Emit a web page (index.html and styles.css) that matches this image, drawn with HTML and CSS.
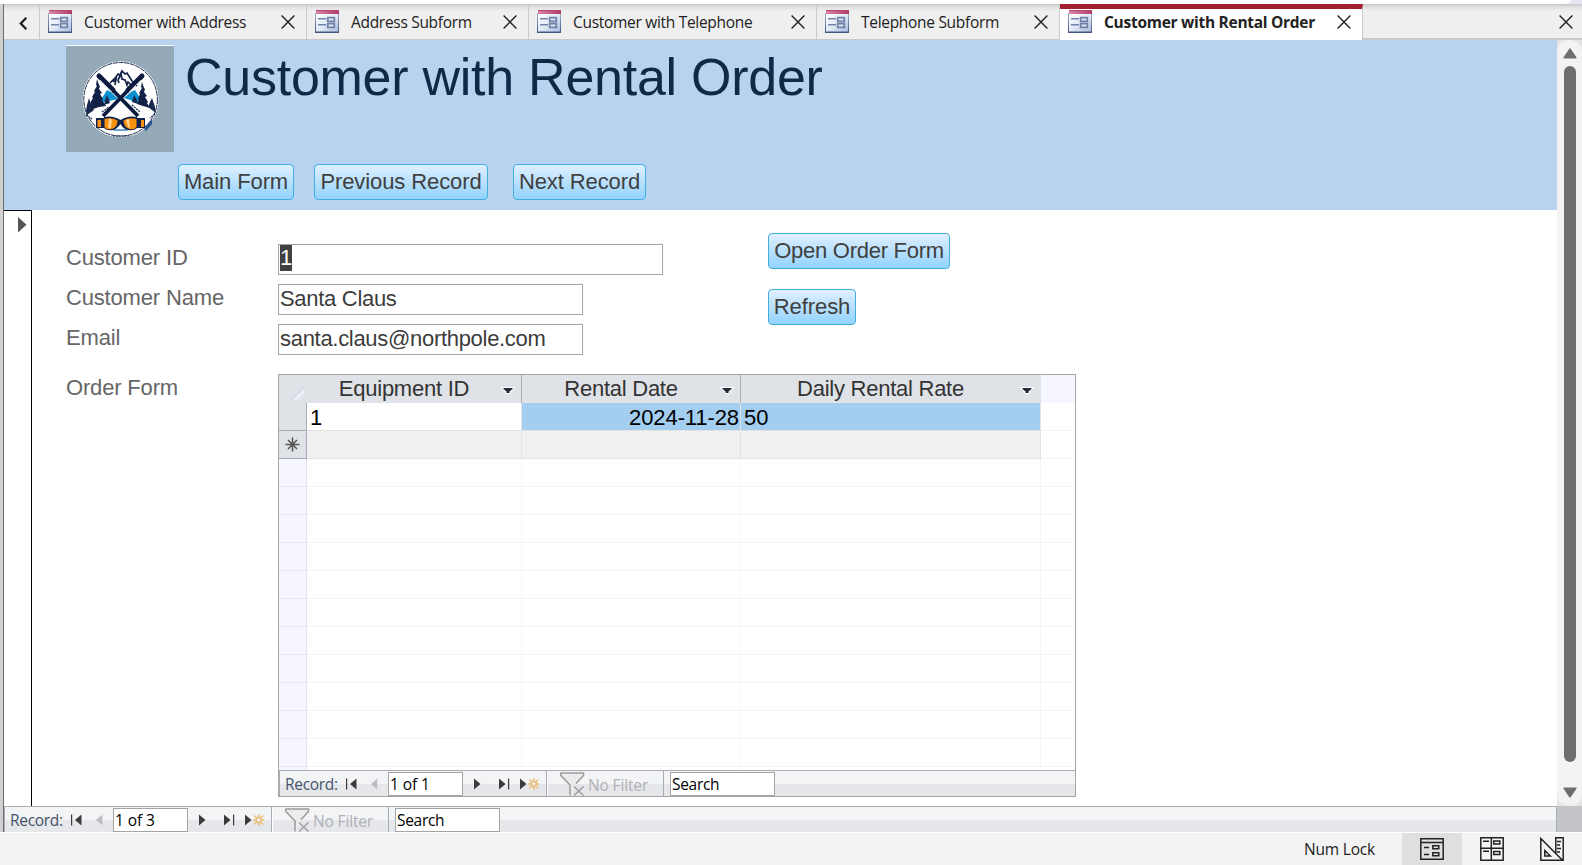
FILE: index.html
```html
<!DOCTYPE html>
<html lang="en">
<head>
<meta charset="utf-8">
<title>Customer with Rental Order</title>
<link rel="stylesheet" href="styles.css">
</head>
<body>
<svg class="defs" width="0" height="0" aria-hidden="true">
  <defs>
    <linearGradient id="g-body" x1="0" y1="0" x2="1" y2="1"><stop offset="0" stop-color="#fff"/><stop offset=".5" stop-color="#e3eaf6"/><stop offset="1" stop-color="#a9bde0"/></linearGradient>
    <linearGradient id="g-top" x1="0" y1="0" x2="1" y2="0"><stop offset="0" stop-color="#d88aa6"/><stop offset="1" stop-color="#b13a66"/></linearGradient>
    <linearGradient id="g-side" x1="0" y1="0" x2="0" y2="1"><stop offset="0" stop-color="#9db0d2"/><stop offset="1" stop-color="#44557c"/></linearGradient>
    <linearGradient id="g-corner" x1="0" y1="0" x2="1" y2="1"><stop offset=".4" stop-color="#f8f9fb"/><stop offset="1" stop-color="#d6dbe4"/></linearGradient>
    <symbol id="i-form" viewBox="0 0 24 23">
      <rect x="0" y="3" width="24" height="20" fill="url(#g-side)"/>
      <rect x="1" y="4" width="22" height="17.5" fill="url(#g-body)"/>
      <rect x="1" y="0" width="23" height="4" fill="url(#g-top)"/>
      <rect x="1" y="0" width="23" height="1" fill="#b9446f"/>
      <path d="M3 8.8h8M3 14.8h8" stroke="#6f83ad" stroke-width="1.6"/>
      <path d="M12.7 7.7h6.6v3.6h-6.6zM12.7 13.7h6.6v3.6h-6.6z" fill="#dfe6f3" stroke="#7082a6" stroke-width="1.8"/>
    </symbol>
    <symbol id="i-close" viewBox="0 0 14 14"><path d="M.6.6l12.8 12.8M13.4.6L.6 13.4" stroke="#222" stroke-width="1.4" fill="none"/></symbol>
    <symbol id="i-first" viewBox="0 0 11 12"><path d="M0 .5h1.2v11H0zM10.5.5v11L4 6z" fill="#3b3b3b"/></symbol>
    <symbol id="i-prev" viewBox="0 0 7 12"><path d="M6.3.8v10.4L0 6z" fill="#bdbdc1"/></symbol>
    <symbol id="i-next" viewBox="0 0 7 12"><path d="M0 .6v10.8L6.5 6z" fill="#3b3b3b"/></symbol>
    <symbol id="i-last" viewBox="0 0 11 12"><path d="M9 .5h1.2v11H9zM0 .5v11L6.5 6z" fill="#3b3b3b"/></symbol>
    <symbol id="i-new" viewBox="0 0 20 12"><path d="M0 .5v11L6.5 6z" fill="#3b3b3b"/><circle cx="13.7" cy="6" r="2.6" fill="none" stroke="#e9be7a" stroke-width="1.6"/><path d="M13.7 0v3.6M13.7 8.4V12M8 6h3M16.4 6h3M9.2 1.4l2.8 2.8M15.4 7.8l2.8 2.8M18.2 1.4l-2.8 2.8M12 7.8l-2.8 2.8" stroke="#e9be7a" stroke-width="1.4"/></symbol>
    <symbol id="i-funnel" viewBox="0 0 25 24"><path d="M10 23.5V13L.8 3.5V1h22.7v2.5L16 11.5" fill="#ececee" stroke="#9b9b9b" stroke-width="1.5"/><path d="M14 14.5l9.5 9M23.5 14.5l-9.5 9" stroke="#9f9f9f" stroke-width="1.5"/></symbol>
    <symbol id="i-drop" viewBox="0 0 14 7"><path d="M0 0h14v1.2h-1.500L8.800 7H5.200L1.500 1.200H0z" fill="#fff"/><path d="M2.500 1h9v1L8.500 4.500V6h-3V4.500L2.500 2z" fill="#222c38"/></symbol>
  </defs>
</svg>

<div class="window">
  <div class="edge"></div>
  <div class="top-strip"><div class="top-card"></div></div>

  <nav class="tabs">
    <div class="tab-scroll"><svg width="9" height="13" viewBox="0 0 9 13"><path d="M7.300.8L1.800 6.500l5.500 5.700" fill="none" stroke="#222" stroke-width="2.300"/></svg></div>
    <div class="tab t1"><svg class="tab-icon"><use href="#i-form"/></svg><span class="tab-text">Customer with Address</span><svg class="tab-close"><use href="#i-close"/></svg></div>
    <div class="tab t2"><svg class="tab-icon"><use href="#i-form"/></svg><span class="tab-text">Address Subform</span><svg class="tab-close"><use href="#i-close"/></svg></div>
    <div class="tab t3"><svg class="tab-icon"><use href="#i-form"/></svg><span class="tab-text">Customer with Telephone</span><svg class="tab-close"><use href="#i-close"/></svg></div>
    <div class="tab t4"><svg class="tab-icon"><use href="#i-form"/></svg><span class="tab-text">Telephone Subform</span><svg class="tab-close"><use href="#i-close"/></svg></div>
    <div class="tab t5 active"><svg class="tab-icon"><use href="#i-form"/></svg><span class="tab-text">Customer with Rental Order</span><svg class="tab-close"><use href="#i-close"/></svg></div>
    <div class="tab-rest"><svg class="tab-close"><use href="#i-close"/></svg></div>
  </nav>

  <div class="work">
    <div class="form">
      <header class="form-head">
        <svg class="logo" width="108" height="107" viewBox="0 0 108 107">
          <rect width="108" height="107" fill="#94aab8"/><rect width="108" height="1" fill="#fff"/>
          <circle cx="54.600" cy="54.300" r="38" fill="#fff"/>
          <circle cx="54.600" cy="54.300" r="36.800" fill="none" stroke="#17264d" stroke-width="1" stroke-dasharray="5 .7"/>
          <path d="M33 58l8-13 4 2 7 7-9 2zM58 53l7-6 4-2 7 11-4 2-8-3z" fill="#0b92cf"/>
          <path d="M44 38l6-6 2-3 2 1 2-4 3 3 2-1 5 8 5 5M47 37l3-3-1 6M55 29l1 5 3 1 2 5 1-3 4 4M54 31l-2 4 1 3" stroke="#14234a" stroke-width="1.700" fill="none"/>
          <path d="M31 34l2 6 1 1-1 3 3 4-2 1 3 5-1 1 4 6-7 1-9 3-2-3 3-3-1-1 3-5-1-1 3-5-1-1 3-5-1-1zM76 37l2 6 1 1-1 3 3 4-2 1 3 5-1 1 3 5-7-2-6-2 2-4-1-1 2-5-1-1 3-5-1-1z" fill="#122047"/>
          <path d="M23 53l2 7 3 5-7 5-1-4 1-6zM86 53l3 9 1 6-8-6 2-5zM41 50l2 5 1 3-6 2 1-5zM68 50l3 5 1 4-6-2z" fill="#17264d"/>
          <path d="M21 73c10-9 20-13 28-14l-12 11-2 3zM60 58c9 1 20 7 28 14l-6 2-11-2z" fill="#fff"/>
          <path d="M20 70l6 4M89 69l-5 4M36 67l7-5M66 60l8 7M47 91h16" stroke="#17264d" stroke-width="1.200" stroke-dasharray="2 .8"/>
          <path d="M34 32L72 71M75 32L37 71" stroke="#0d1a3f" stroke-width="3.800"/>
          <path d="M33 31l14 14M76 31L62 45" stroke="#0d1a3f" stroke-width="5" stroke-linecap="round"/>
          <path d="M34 35l12 12M75 35L63 47" stroke="#dfe4ec" stroke-width=".8"/>
          <path d="M78 84l8-10v5l-6 7z" fill="#27548e"/>
          <path d="M46 84h17l-2 2H48z" fill="#6fa5d2"/>
          <path d="M30 73h8v-1q9-2 16.500 3 7.500-5 16.500-3v1h8v10h-8q-3 3-9 2-5-1-7.500-6-3.500 5-7.500 6-6 1-9-2h-8z" fill="#14234a"/>
          <path d="M31.500 75h3.500v7h-3.500zM75 75h3v7h-3zM38.500 74q7-2 13 1.500 0 7-6 8.500-5 1-7-2zM57.500 75.500q6-3.500 13-1.500v8q-2 3-7 2-6-2-6-8.500z" fill="#f8920f"/>
          <path d="M43 73.500l-1 9 3 1 1-9zM60 75l2 7 2 1-1-9z" fill="#ffd28e"/>
        </svg>
        <div class="head-main">
          <h1>Customer with Rental Order</h1>
          <div class="head-buttons">
            <button class="btn b-main">Main Form</button>
            <button class="btn b-prev">Previous Record</button>
            <button class="btn b-next">Next Record</button>
          </div>
        </div>
      </header>

      <div class="detail">
        <div class="selector"><svg width="9" height="16" viewBox="0 0 9 16"><path d="M0 0v15.500L8.500 7.700z" fill="#555"/></svg></div>
        <main class="fields">
          <label class="f-label">Customer ID</label><div class="box wide"><span class="sel">1</span></div>
          <label class="f-label">Customer Name</label><div class="box">Santa Claus</div>
          <label class="f-label">Email</label><div class="box">santa.claus@northpole.com</div>
          <label class="f-label">Order Form</label>
          <section class="sub">
            <div class="sheet">
              <div class="corner"><svg width="12" height="12" viewBox="0 0 12 12"><path d="M12 0v12H0z" fill="url(#g-corner)"/><path d="M12 0L0 12" stroke="#bccbe2" stroke-width=".8"/></svg></div>
              <div class="th"><span>Equipment ID</span><svg class="drop"><use href="#i-drop"/></svg></div>
              <div class="th"><span>Rental Date</span><svg class="drop"><use href="#i-drop"/></svg></div>
              <div class="th last"><span>Daily Rental Rate</span><svg class="drop"><use href="#i-drop"/></svg></div>
              <div class="th-end"></div>
              <div class="rs"></div><div class="td">1</div><div class="td on right">2024-11-28</div><div class="td on">50</div><div class="td-end"></div>
              <div class="rs"><svg width="15" height="15" viewBox="0 0 15 15"><path d="M7.500 .5v14M.5 7.500h14M3 3l9 9M12 3l-9 9" stroke="#555" stroke-width="1.500"/></svg></div><div class="td new"></div><div class="td new"></div><div class="td new"></div><div class="td-end"></div>
              <div class="blank b-rs"></div><div class="blank"></div><div class="blank"></div><div class="blank"></div><div class="blank b-end"></div>
            </div>
            <div class="recnav">
              <div class="rn-move">
                <span class="rn-label">Record:</span>
                <svg class="n-first"><use href="#i-first"/></svg><svg class="n-prev"><use href="#i-prev"/></svg>
                <span class="rn-input pos">1 of 1</span>
                <svg class="n-next"><use href="#i-next"/></svg><svg class="n-last"><use href="#i-last"/></svg><svg class="n-new"><use href="#i-new"/></svg>
              </div>
              <div class="rn-filter"><svg class="funnel"><use href="#i-funnel"/></svg><span class="nf">No Filter</span></div>
              <span class="rn-input search">Search</span>
            </div>
          </section>
        </main>
        <aside class="actions">
          <button class="btn b-open">Open Order Form</button>
          <button class="btn b-refresh">Refresh</button>
        </aside>
      </div>
    </div>
    <div class="scroll">
      <svg width="14" height="11" viewBox="0 0 14 11"><path d="M7 1.200L12.800 9.800H1.200z" fill="#6e6e6e" stroke="#6e6e6e" stroke-width="1.600" stroke-linejoin="round"/></svg>
      <div class="thumb"></div>
      <svg width="14" height="11" viewBox="0 0 14 11"><path d="M7 9.800L12.800 1.200H1.200z" fill="#6e6e6e" stroke="#6e6e6e" stroke-width="1.600" stroke-linejoin="round"/></svg>
    </div>
  </div>

  <div class="bottom">
    <div class="recnav">
      <div class="rn-move">
        <span class="rn-label">Record:</span>
        <svg class="n-first"><use href="#i-first"/></svg><svg class="n-prev"><use href="#i-prev"/></svg>
        <span class="rn-input pos">1 of 3</span>
        <svg class="n-next"><use href="#i-next"/></svg><svg class="n-last"><use href="#i-last"/></svg><svg class="n-new"><use href="#i-new"/></svg>
      </div>
      <div class="rn-filter"><svg class="funnel"><use href="#i-funnel"/></svg><span class="nf">No Filter</span></div>
      <span class="rn-input search">Search</span>
    </div>
    <div class="grip"></div>
  </div>

  <footer class="status">
    <span class="numlock">Num Lock</span>
    <div class="view on"><svg width="24" height="22" viewBox="0 0 24 22"><g fill="none" stroke="#222" stroke-width="1.500"><path d="M.8.8h22.400v20.400H.8zM.8 4.500h22.400M4 9.500h5M4 16.500h5M12.800 7.800h6v3h-6zM12.800 14.800h6v3h-6z"/></g></svg></div>
    <div class="view"><svg width="24" height="24" viewBox="0 0 24 24"><g fill="none" stroke="#222" stroke-width="1.500"><path d="M.8.8h22.400v22.400H.8zM11.300 1v22M1 11.300h22M3 4.200h6M3 14.300h6M13.800 4h6v3h-6zM13.800 14.500h6v3h-6z"/></g></svg></div>
    <div class="view"><svg width="24" height="24" viewBox="0 0 24 24"><g fill="none" stroke="#222" stroke-width="1.500"><path d="M.8 1.500v21.700h21.700zM4.800 13.500v5.500h5.500zM15.800 16V.8h7.400v22.400M17 4.500h4M17 8h3M17 11.500h4M17 15h3"/></g></svg></div>
  </footer>
</div>
</body>
</html>
```

FILE: styles.css
```css
* { box-sizing: border-box; }
body { margin: 0; background: #fff; font-family: "Liberation Sans", Arial, sans-serif; overflow: hidden; }
svg { display: block; flex: none; }
.defs { position: absolute; }

.window { display: grid; width: 1582px; height: 865px; grid-template: 4px 36px 766px 26px 33px / 4px 1578px; }
.edge { grid-row: 2 / 5; grid-column: 1; background: #d0d0d0; border-right: 1px solid #6e6e6e; }
.top-strip { grid-column: 1 / 3; grid-row: 1; background: #e4e7f3; }
.top-card { width: 1571px; height: 4px; background: #fff; border-bottom-right-radius: 8px 4px; }
.tabs, .work, .bottom { grid-column: 2; }

/* document tabs */
.tabs { display: flex; background: linear-gradient(#c9c9c9, #e0e0e0 3px, #efefef 7px); font: 15.5px "Open Sans", "Noto Sans", sans-serif; color: #222; }
.tab-scroll { width: 36px; border-right: 1px solid #cacaca; border-bottom: 1px solid #cacaca; padding: 13px 0 0 15px; }
.tab { display: flex; align-items: flex-start; padding: 6px 11px 0 8px; border-right: 1px solid #cacaca; border-bottom: 1px solid #cacaca; white-space: nowrap; letter-spacing: -.3px; }
.tab-icon { width: 24px; height: 23px; margin-right: 12px; }
.tab-text { line-height: 24px; }
.tab-close { width: 14px; height: 14px; margin: 5px 0 0 auto; }
.t1 { width: 267px; }
.t2 { width: 222px; }
.t3 { width: 288px; }
.t4 { width: 243px; }
.t5 { width: 303px; }
.active { background: #fff; border-top: 5px solid #a31f30; border-bottom: 0; padding-top: 1px; font-weight: 700; letter-spacing: -.28px; }
.tab-rest { flex: 1; display: flex; border-bottom: 2px solid #cacaca; padding: 6px 9px 0 0; }

/* form */
.work { display: flex; }
.form { width: 1553px; display: flex; flex-direction: column; }
.form-head { height: 170px; background: #b8d3f0; display: flex; padding: 5px 0 0 62px; }
.head-main { padding-left: 4px; }
h1 { margin: 0 0 0 7px; height: 119px; padding-top: 2px; font-size: 52px; line-height: 60px; font-weight: 400; color: #0f2a47; letter-spacing: -.26px; white-space: nowrap; }
.head-buttons { display: flex; }
.btn { height: 36px; padding: 0 0 1px; font: 22px/32px "Liberation Sans", Arial, sans-serif; letter-spacing: -.1px; color: #404040; border: 1px solid #41b0e0; border-radius: 4px; background: linear-gradient(#dff0ff, #b9e0fd 50%, #92d3fd); white-space: nowrap; }
.b-main { width: 116px; }
.b-prev { width: 174px; margin-left: 20px; }
.b-next { width: 133px; margin-left: 25px; }

.detail { flex: 1; display: flex; }
.selector { width: 28px; border-top: 1px solid #000; border-right: 1px solid #000; padding: 6px 0 0 14px; }
.fields { width: 736px; display: grid; align-content: start; align-items: start; padding: 34px 0 0 34px; grid-template: 40px 40px 50px 423px / 212px 798px; font-size: 22px; color: #3c3c3c; }
.f-label { color: #666; line-height: 28px; white-space: nowrap; letter-spacing: -.17px; }
.box { width: 305px; height: 31px; border: 1px solid #a5a5a5; padding-left: 1px; line-height: 27px; letter-spacing: -.3px; }
.box.wide { width: 385px; }
.sel { display: inline-block; height: 26px; line-height: 26px; background: #404040; color: #fff; vertical-align: top; }
.actions { display: flex; flex-direction: column; align-items: flex-start; padding-top: 23px; gap: 20px; }
.b-open { width: 182px; letter-spacing: -.27px; }
.b-refresh { width: 88px; }

/* datasheet */
.sub { width: 798px; height: 423px; border: 1px solid #a5a5a5; background: #fff; display: flex; flex-direction: column; }
.sheet { display: grid; height: 395px; grid-template: 28px 28px 28px 311px / 28px 215px 219px 300px 34px; }
.corner { background: #dfe2e7; padding: 13px 0 0 13px; }
.th { display: flex; background: #dfe2e7; border-right: 1px solid #a9acb2; padding-right: 6px; color: #333; line-height: 28px; letter-spacing: -.25px; }
.th.last { border-right-color: #dfe2e7; }
.th span { flex: 1; text-align: center; }
.drop { width: 14px; height: 7px; margin-top: 12px; }
.th-end { background: #f5f6fe; }
.rs { background: #dfe2e7; border-right: 1px solid #a9acb2; border-bottom: 1px solid #a9acb2; padding: 6px 0 0 6px; }
.td { border-right: 1px solid #e3e3e3; border-bottom: 1px solid #e3e3e3; line-height: 29px; padding: 0 1px 0 3px; color: #000; }
.td.on { background: #a3cef0; }
.td.right { text-align: right; letter-spacing: -.1px; }
.td.new { background: #f1f1f1; }
.td-end { border-bottom: 1px solid #f4f4f4; }
.blank { border-right: 1px solid #f6f6f6; background: repeating-linear-gradient(transparent 0 27px, #f4f4f4 27px 28px); }
.b-rs { background: repeating-linear-gradient(transparent 0 27px, #e6e7ee 27px 28px), #f5f6fe; border-right-color: #e3e4ea; }
.b-end { border-right: 0; }

/* record navigation bar */
.recnav { display: flex; height: 26px; border-top: 1px solid #a9abb6; border-left: 1px solid #a9abb6; background: linear-gradient(#f3f4f6 13px, #e6e7eb 13px); font: 15.5px/24px "Open Sans", "Noto Sans", sans-serif; color: #44546a; white-space: nowrap; overflow: hidden; }
.rn-move { display: flex; width: 267px; border-right: 1px solid #a9abb6; padding-left: 5px; }
.rn-label { width: 61px; letter-spacing: -.3px; line-height: 27px; }
.rn-move svg { height: 12px; margin-top: 7px; }
.n-first { width: 11px; }
.n-prev { width: 7px; margin-left: 14px; }
.n-next { width: 7px; margin-left: 11px; }
.n-last { width: 11px; margin-left: 18px; }
.n-new { width: 20px; margin-left: 10px; }
.rn-input { height: 24px; margin-top: 1px; border: 1px solid #a5a5a5; background: #fff; color: #000; padding-left: 2px; letter-spacing: -.3px; line-height: 23px; }
.pos { width: 75px; margin-left: 10px; padding-left: 1px; letter-spacing: -.1px; }
.rn-filter { display: flex; width: 117px; border-right: 1px solid #a9abb6; border-left: 1px solid #fff; padding-left: 12px; color: #b0b1b4; }
.funnel { width: 25px; height: 24px; margin-top: 1px; }
.nf { margin-left: 3px; line-height: 28px; letter-spacing: -.15px; }
.search { width: 105px; margin-left: 6px; padding-left: 1px; }

/* scrollbar */
.scroll { width: 25px; background: #f3f3f3; border-radius: 12px; display: flex; flex-direction: column; align-items: center; padding: 8px 0; box-shadow: 0 0 0 12px #e4e4e4; clip-path: inset(0); }
.thumb { width: 12px; height: 697px; margin: 7px 0 25px; border-radius: 6px; background: #6e6e6e; }

.bottom { display: flex; }
.bottom .recnav { width: 1553px; border-right: 1px solid #a9abb6; }
.grip { width: 25px; background: #c4c5c9; }

.status { grid-column: 1 / 3; display: flex; justify-content: flex-end; background: #f3f3f3; border-top: 1px solid #fff; font: 15.5px/32px "Open Sans", "Noto Sans", sans-serif; color: #222; }
.numlock { width: 98px; letter-spacing: -.2px; }
.view { width: 60px; display: flex; justify-content: center; align-items: center; }
.view.on { background: #dfdfdf; }
```
